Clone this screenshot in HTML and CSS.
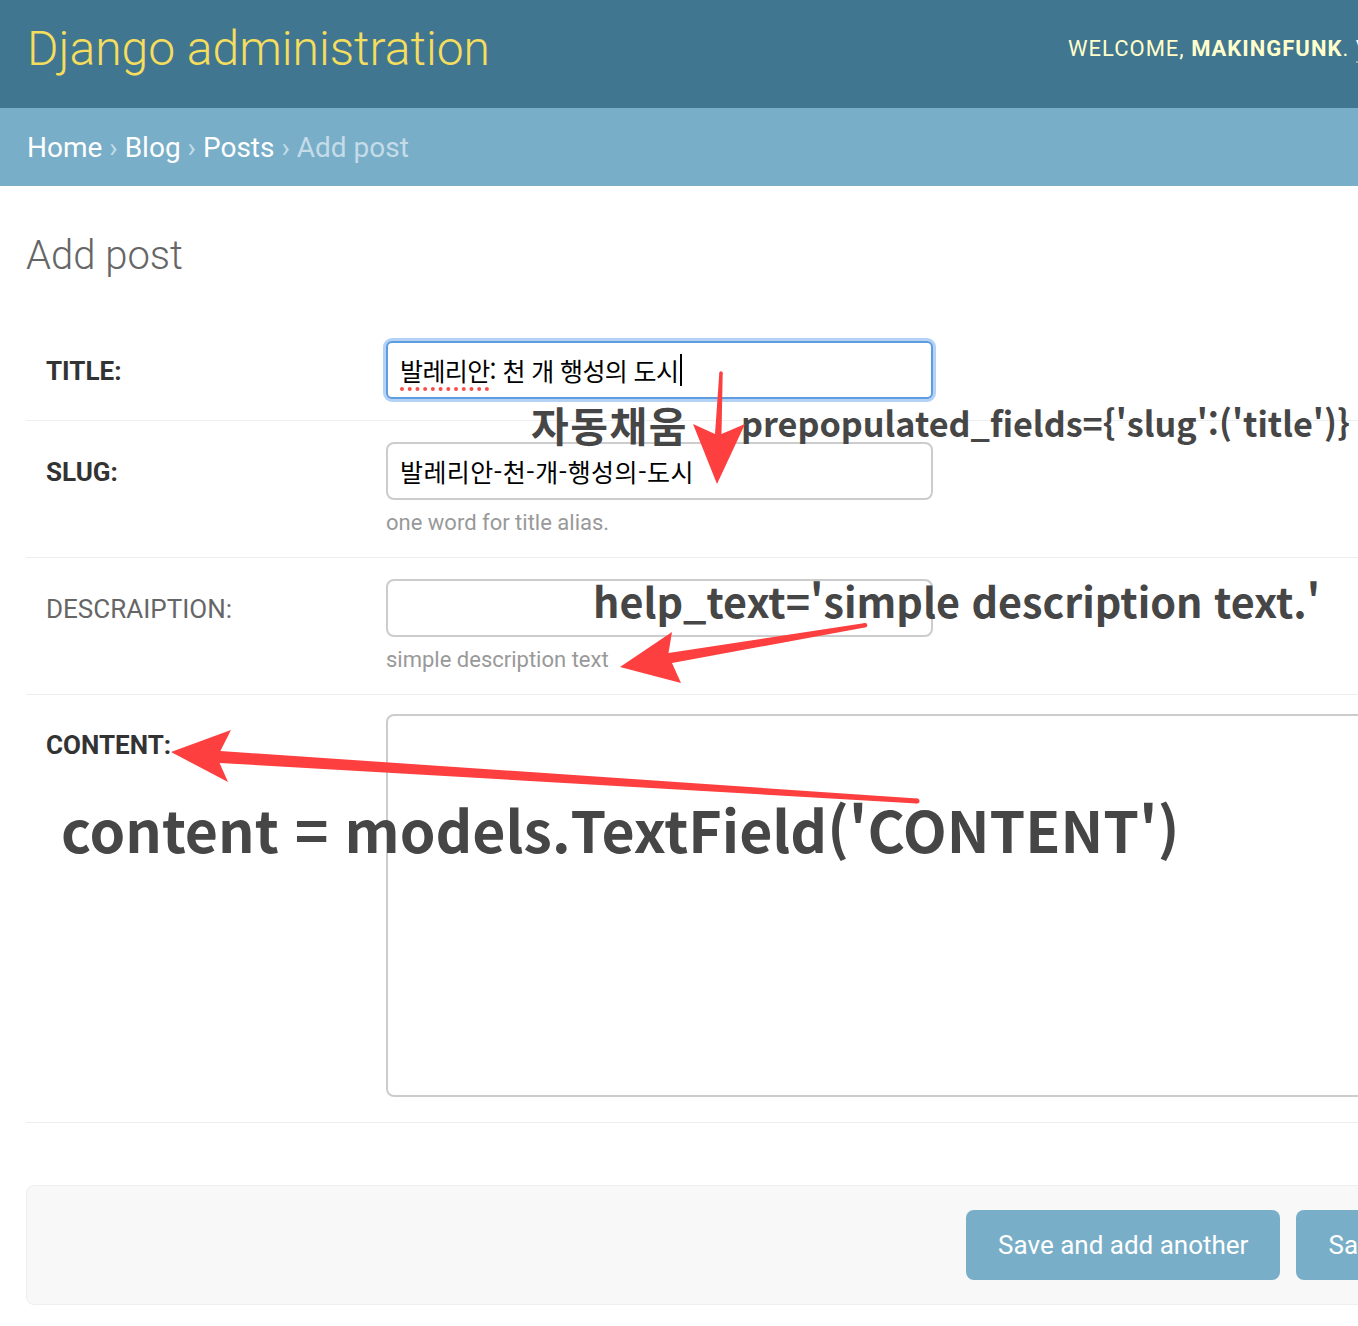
FILE: index.html
```html
<!DOCTYPE html>
<html lang="ko">
<head>
<meta charset="utf-8">
<title>Add post | Django site admin</title>
<link rel="stylesheet" href="styles.css">
</head>
<body>
<div class="page">
  <header class="header">
    <div class="branding">Django administration</div>
    <div class="user-tools">WELCOME, <strong>MAKINGFUNK</strong>. <a href="#">VIEW SITE</a> / <a href="#">CHANGE PASSWORD</a> / <a href="#">LOG OUT</a></div>
  </header>
  <nav class="breadcrumbs"><a href="#">Home</a> › <a href="#">Blog</a> › <a href="#">Posts</a> › Add post</nav>

  <main class="content">
    <h1 class="page-title">Add post</h1>
    <form class="form">
      <div class="form-row">
        <label class="field-label required">Title:</label>
        <div class="field">
          <div class="input focused"><span class="misspelled">발레리안</span>: 천 개 행성의 도시<span class="caret"></span></div>
        </div>
      </div>
      <div class="form-row">
        <label class="field-label required">Slug:</label>
        <div class="field">
          <div class="input slug">발레리안-천-개-행성의-도시</div>
          <div class="help">one word for title alias.</div>
        </div>
      </div>
      <div class="form-row">
        <label class="field-label">Descraiption:</label>
        <div class="field">
          <div class="input"></div>
          <div class="help">simple description text</div>
        </div>
      </div>
      <div class="form-row last">
        <label class="field-label required">Content:</label>
        <div class="field">
          <div class="textarea"></div>
        </div>
      </div>

      <div class="submit-row">
        <button type="button" class="btn">Save and add another</button>
        <button type="button" class="btn">Save and continue editing</button>
        <button type="button" class="btn default">Save</button>
      </div>
    </form>
  </main>

  <div class="annotations">
    <div class="ann ann-autofill">자동채움</div>
    <div class="ann ann-prepop">prepopulated_fields={'slug':('title')}</div>
    <div class="ann ann-help">help_text='simple description text.'</div>
    <div class="ann ann-content">content = models.TextField('CONTENT')</div>
    <svg class="arrows" width="1358" height="1326" viewBox="0 0 1358 1326" xmlns="http://www.w3.org/2000/svg">
      <polygon fill="#fd3f3f" points="719.3,373 722.7,373 721.5,434 745,424 717,484 693,424 715,434"/>
      <circle fill="#fd3f3f" cx="721" cy="373" r="1.7"/>
      <polygon fill="#fd3f3f" points="865.3,623 668.5,653 672,632 620,667 681,683 672,663 864.7,627.5"/>
      <circle fill="#fd3f3f" cx="865" cy="625.3" r="2.3"/>
      <polygon fill="#fd3f3f" points="917.2,798.5 220.4,751 231,730 171,752 228,782 219.6,763 916.8,803.5"/>
      <circle fill="#fd3f3f" cx="917" cy="801" r="2.5"/>
    </svg>
  </div>
</div>
</body>
</html>
```

FILE: styles.css
```css
html, body {
  margin: 0;
  padding: 0;
  overflow: hidden;
  background: #fff;
}

body {
  font-family: Roboto, "Noto Sans CJK KR", "Liberation Sans", sans-serif;
  color: #333;
}

.page {
  position: relative;
  width: 1849px;
}

/* Header */
.header {
  height: 108px;
  box-sizing: border-box;
  background: #417690;
  display: grid;
  grid-template-columns: 1041px 1fr;
  align-items: start;
  padding: 21px 27px 0;
}

.branding {
  font-size: 48px;
  font-weight: 300;
  line-height: 56px;
  color: #f5dd5d;
  white-space: nowrap;
}

.user-tools {
  margin-top: 15px;
  font-size: 22px;
  line-height: 26px;
  letter-spacing: 1px;
  color: #ffc;
  white-space: nowrap;
}

.user-tools strong {
  font-weight: 700;
}

.user-tools a {
  color: #fff;
  text-decoration: none;
  border-bottom: 2px solid rgba(255, 255, 204, 0.4);
}

/* Breadcrumbs */
.breadcrumbs {
  height: 78px;
  box-sizing: border-box;
  background: #79aec8;
  padding: 2px 27px 0;
  line-height: 76px;
  font-size: 28px;
  color: #c4dce8;
  white-space: nowrap;
}

.breadcrumbs a {
  color: #fff;
  text-decoration: none;
}

/* Content */
.content {
  padding: 46px 26px 40px;
}

.page-title {
  margin: 0 0 40px;
  font-size: 40px;
  font-weight: 300;
  line-height: 48px;
  color: #666;
}

.form-row {
  display: grid;
  grid-template-columns: 340px 1fr;
  padding: 21px 20px;
  border-bottom: 1px solid #eee;
}

.form-row.last {
  padding-top: 19px;
  padding-bottom: 25px;
}

.field-label {
  padding-top: 15px;
  font-size: 26px;
  line-height: 30px;
  text-transform: uppercase;
  color: #666;
  font-weight: 400;
}

.form-row.last .field-label {
  padding-top: 16px;
}

.field-label.required {
  color: #333;
  font-weight: 700;
}

.field {
  display: flex;
  flex-direction: column;
  align-items: flex-start;
}

.input {
  width: 547px;
  height: 58px;
  box-sizing: border-box;
  border: 2px solid #ccc;
  border-radius: 8px;
  padding: 0 12px;
  display: flex;
  align-items: center;
  font-family: "Noto Sans CJK KR", Roboto, sans-serif;
  font-size: 25px;
  letter-spacing: -0.6px;
  color: #000;
  white-space: pre;
  background: #fff;
}

.input.slug {
  letter-spacing: 0.4px;
}

.input.focused {
  border-color: #5d9de0;
  border-radius: 6px;
  box-shadow: 0 0 0 3px #b3d2f6;
}

.misspelled {
  text-decoration: underline dotted #f5504c;
  text-decoration-thickness: 4px;
  text-underline-offset: 6px;
}

.caret {
  display: inline-block;
  width: 2px;
  height: 32px;
  margin-left: 2px;
  background: #000;
}

.help {
  margin-top: 9px;
  font-size: 22px;
  line-height: 27px;
  color: #999;
  white-space: nowrap;
}

.textarea {
  width: 1220px;
  height: 383px;
  box-sizing: border-box;
  border: 2px solid #ccc;
  border-radius: 8px;
  background: #fff;
}

/* Submit row */
.submit-row {
  margin-top: 62px;
  display: flex;
  justify-content: flex-end;
  gap: 16px;
  padding: 24px 28px;
  background: #f8f8f8;
  border: 1px solid #eee;
  border-radius: 8px;
}

.btn {
  height: 70px;
  padding: 0 32px;
  border: 0;
  border-radius: 8px;
  background: #79aec8;
  color: #fff;
  font-family: Roboto, "Liberation Sans", sans-serif;
  font-size: 26px;
  white-space: nowrap;
}

.btn.default {
  background: #417690;
  font-weight: 700;
}

/* Annotations overlay */
.annotations {
  position: absolute;
  left: 0;
  top: 0;
  width: 1358px;
  height: 1326px;
  pointer-events: none;
}

.arrows {
  position: absolute;
  left: 0;
  top: 0;
}

.ann {
  position: absolute;
  font-family: "Noto Sans CJK KR", "Open Sans", sans-serif;
  font-weight: 700;
  color: #464646;
  line-height: 1;
  white-space: nowrap;
}

.ann-autofill {
  left: 531px;
  top: 404px;
  font-size: 41px;
  letter-spacing: 1.5px;
}

.ann-prepop {
  left: 741px;
  top: 405px;
  font-size: 34.2px;
}

.ann-help {
  left: 593px;
  top: 580px;
  font-size: 41.3px;
}

.ann-content {
  left: 61px;
  top: 800px;
  font-size: 57.2px;
}
```
